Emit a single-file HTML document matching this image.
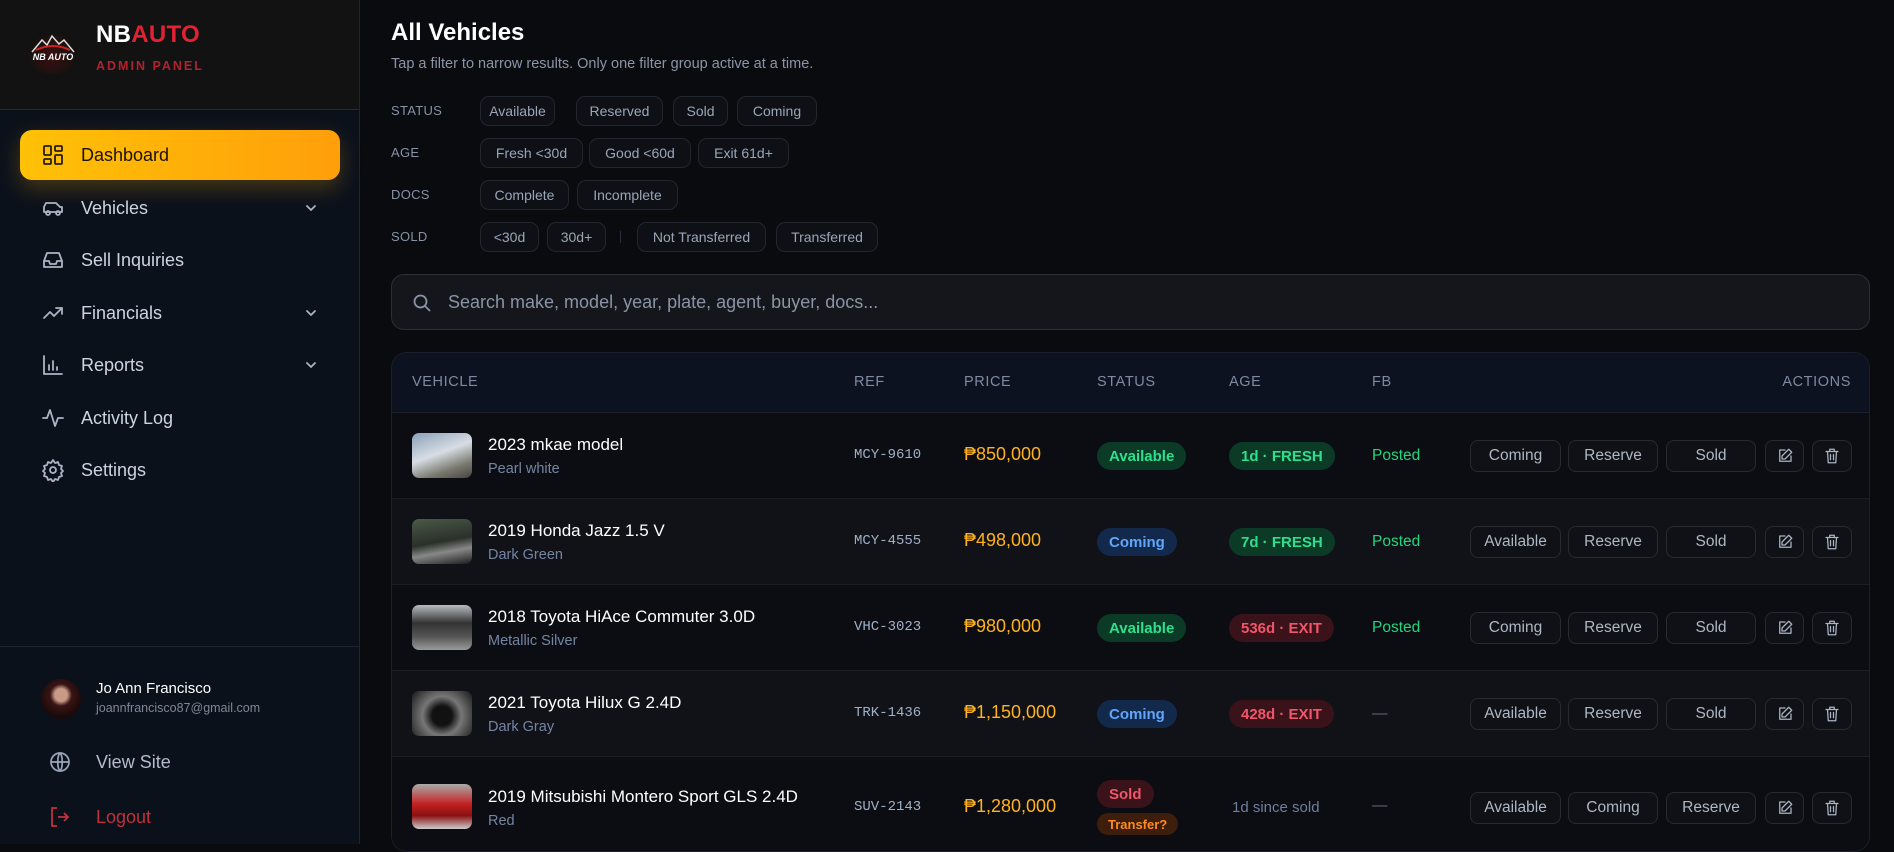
<!DOCTYPE html>
<html><head><meta charset="utf-8"><style>
*{box-sizing:border-box;margin:0;padding:0}
body{width:1894px;height:844px;overflow:hidden;background:#0a0b0f;font-family:"Liberation Sans",Arial,sans-serif;color:#e5e7eb;position:relative}
.side{position:absolute;left:0;top:0;width:360px;height:844px;background:#0b111b;border-right:1px solid #1f2430}
.brand{height:110px;background:#121212;border-bottom:1px solid #262a33;position:relative}
.nav{position:absolute;left:20px;width:320px;height:50px;display:flex;align-items:center;font-size:18px;color:#cbd5e1}
.nav svg{position:absolute;left:21px;width:24px;height:24px;fill:none;stroke:#aab4c3;stroke-width:1.8;stroke-linecap:round;stroke-linejoin:round}
.nav span{position:absolute;left:61px}
.nav .chev{left:auto;right:22px;width:14px;height:14px}
.act{background:linear-gradient(90deg,#ffc107,#ff9f0a);border-radius:12px;color:#1a1300;box-shadow:0 8px 22px rgba(255,170,0,.25)}
.act svg{stroke:#2a1c00}
.main{position:absolute;left:361px;top:0;right:0;height:844px}
h1{position:absolute;left:30px;top:19px;font-size:24px;font-weight:700;color:#fff}
.sub{position:absolute;left:30px;top:56px;font-size:14.5px;color:#8b95a7}
.flab{position:absolute;left:30px;font-size:13px;color:#8792a5;letter-spacing:.3px}
.chip{position:absolute;height:30px;border:1px solid #22262f;border-radius:9px;background:#0e1016;color:#9aa6b8;font-size:14px;display:flex;align-items:center;justify-content:center;white-space:nowrap}
.search{position:absolute;left:30px;top:274px;width:1479px;height:56px;border:1px solid #2a2e37;border-radius:13px;background:#14161b;color:#8a94a6;font-size:18px;display:flex;align-items:center;padding-left:56px}
.search svg{position:absolute;left:20px;top:18px}
.tbl{position:absolute;left:30px;top:352px;width:1479px;height:500px;border:1px solid #1a1f2a;border-radius:16px;overflow:hidden;background:#0c0d12}
.th{position:absolute;left:0;top:0;width:100%;height:60px;background:#0c1220;border-bottom:1px solid #1c212b}
.th div{position:absolute;top:21px;font-size:14.5px;color:#7f8aa0;letter-spacing:.6px}
.row{position:absolute;left:0;width:100%;height:86px;border-bottom:1px solid #1b1e25}
.row>*{position:absolute}
.thumb{left:20px;width:60px;height:45px;border-radius:7px;top:20px}
.nm{left:96px;top:22px;font-size:17px;color:#fff}
.cl{left:96px;top:48px;font-size:14.5px;color:#7485a3}
.ref{left:462px;top:34px;font-family:"Liberation Mono",monospace;font-size:14px;color:#9fb0c8}
.pr{left:572px;top:31px;font-size:18px;color:#ffb21c}
.bd{height:28px;border-radius:14px;font-size:15px;font-weight:700;display:flex;align-items:center;padding:0 12px;top:29px;white-space:nowrap}
.ok{background:#0b3a27;color:#2ee08d}
.cm{background:#13294b;color:#60a5fa}
.ex{background:#3a1219;color:#f0566b}
.fb{left:980px;top:34px;font-size:15.5px;color:#22d67f}
.bt{top:27px;height:32px;border:1px solid #262a33;border-radius:8px;background:#101116;color:#aeb7c5;font-size:15.5px;display:flex;align-items:center;justify-content:center}
.ic svg{width:18px;height:18px;fill:none;stroke:#aab4c3;stroke-width:1.7;stroke-linecap:round;stroke-linejoin:round}
</style></head><body>
<div class="side">
 <div class="brand">
  <div style="position:absolute;left:26px;top:30px;width:52px;height:44px;border-radius:50%;background:radial-gradient(ellipse at 50% 60%,#3a1010,#111 70%)"></div>
  <svg style="position:absolute;left:28px;top:30px" width="50" height="40" viewBox="0 0 50 40"><path d="M4 22 L14 10 L19 15 L24 6 L31 14 L36 10 L46 22" fill="none" stroke="#ddd" stroke-width="1.5"/><path d="M8 20 Q25 12 42 20" stroke="#c22" stroke-width="2" fill="none"/><text x="25" y="30" font-size="9" font-weight="700" font-style="italic" fill="#fff" text-anchor="middle" font-family="Liberation Sans">NB AUTO</text></svg>
  <div style="position:absolute;left:96px;top:21px;font-size:24px;font-weight:800;color:#fff;letter-spacing:.3px">NB<span style="color:#e02232">AUTO</span></div>
  <div style="position:absolute;left:96px;top:59px;font-size:12.5px;font-weight:700;color:#b0222d;letter-spacing:2px">ADMIN PANEL</div>
 </div>
 <div class="nav act" style="top:130px"><svg viewBox="0 0 24 24"><rect x="3" y="3" width="7" height="9" rx="1"/><rect x="14" y="3" width="7" height="5" rx="1"/><rect x="14" y="12" width="7" height="9" rx="1"/><rect x="3" y="16" width="7" height="5" rx="1"/></svg><span>Dashboard</span></div>
 <div class="nav" style="top:183px"><svg viewBox="0 0 24 24"><path d="M3 16V11l2-4h10l4 4h2v5H3z"/><circle cx="7" cy="17" r="2"/><circle cx="17" cy="17" r="2"/></svg><span>Vehicles</span><svg class="chev" viewBox="0 0 14 14"><path d="M3 5l4 4 4-4"/></svg></div>
 <div class="nav" style="top:235px"><svg viewBox="0 0 24 24"><path d="M3 13l3-8h12l3 8v6H3z"/><path d="M3 13h5l1 3h6l1-3h5"/></svg><span>Sell Inquiries</span></div>
 <div class="nav" style="top:288px"><svg viewBox="0 0 24 24"><path d="M3 17l6-6 4 4 8-8"/><path d="M15 7h6v6"/></svg><span>Financials</span><svg class="chev" viewBox="0 0 14 14"><path d="M3 5l4 4 4-4"/></svg></div>
 <div class="nav" style="top:340px"><svg viewBox="0 0 24 24"><path d="M3 3v18h18"/><path d="M8 17v-5M12 17V8M16 17v-3"/></svg><span>Reports</span><svg class="chev" viewBox="0 0 14 14"><path d="M3 5l4 4 4-4"/></svg></div>
 <div class="nav" style="top:393px"><svg viewBox="0 0 24 24"><path d="M2 12h4l3-8 5 16 3-8h5"/></svg><span>Activity Log</span></div>
 <div class="nav" style="top:445px"><svg viewBox="0 0 24 24"><circle cx="12" cy="12" r="3"/><path d="M12 2l2 3 3-1 1 3 3 1-1 3 2 2-2 2 1 3-3 1-1 3-3-1-2 3-2-3-3 1-1-3-3-1 1-3-2-2 2-2-1-3 3-1 1-3 3 1z"/></svg><span>Settings</span></div>
 <div style="position:absolute;left:0;top:646px;width:360px;border-top:1px solid #1f2430"></div>
 <div style="position:absolute;left:41px;top:679px;width:40px;height:40px;border-radius:50%;background:radial-gradient(circle at 50% 40%,#c99a86 0 20%,#3a1414 35%,#1a0a0a 70%)"></div>
 <div style="position:absolute;left:96px;top:680px;font-size:15px;color:#fff">Jo Ann Francisco</div>
 <div style="position:absolute;left:96px;top:701px;font-size:12.5px;color:#7f8796">joannfrancisco87@gmail.com</div>
 <svg style="position:absolute;left:48px;top:750px" width="24" height="24" viewBox="0 0 24 24" fill="none" stroke="#9aa6b8" stroke-width="1.7"><circle cx="12" cy="12" r="9"/><path d="M3 12h18M12 3c3 3 3 15 0 18M12 3c-3 3-3 15 0 18"/></svg>
 <div style="position:absolute;left:96px;top:752px;font-size:18px;color:#b3bccb">View Site</div>
 <svg style="position:absolute;left:48px;top:805px" width="24" height="24" viewBox="0 0 24 24" fill="none" stroke="#c0303c" stroke-width="1.8"><path d="M9 3H4v18h5M10 12h10M16 8l4 4-4 4"/></svg>
 <div style="position:absolute;left:96px;top:807px;font-size:18px;color:#c0303c">Logout</div>
</div>
<div class="main">
 <h1>All Vehicles</h1>
 <div class="sub">Tap a filter to narrow results. Only one filter group active at a time.</div>
 <div class="flab" style="top:103px">STATUS</div>
 <div class="chip" style="left:119px;top:96px;width:75px">Available</div>
 <div class="chip" style="left:215px;top:96px;width:87px">Reserved</div>
 <div class="chip" style="left:312px;top:96px;width:55px">Sold</div>
 <div class="chip" style="left:376px;top:96px;width:80px">Coming</div>
 <div class="flab" style="top:145px">AGE</div>
 <div class="chip" style="left:119px;top:138px;width:103px">Fresh &lt;30d</div>
 <div class="chip" style="left:228px;top:138px;width:102px">Good &lt;60d</div>
 <div class="chip" style="left:337px;top:138px;width:91px">Exit 61d+</div>
 <div class="flab" style="top:187px">DOCS</div>
 <div class="chip" style="left:119px;top:180px;width:89px">Complete</div>
 <div class="chip" style="left:216px;top:180px;width:101px">Incomplete</div>
 <div class="flab" style="top:229px">SOLD</div>
 <div class="chip" style="left:119px;top:222px;width:59px">&lt;30d</div>
 <div class="chip" style="left:186px;top:222px;width:59px">30d+</div>
 <div style="position:absolute;left:259px;top:231px;width:1px;height:12px;background:#2b3040"></div>
 <div class="chip" style="left:276px;top:222px;width:129px">Not Transferred</div>
 <div class="chip" style="left:415px;top:222px;width:102px">Transferred</div>
 <div class="search"><svg width="20" height="20" viewBox="0 0 20 20" fill="none" stroke="#8a94a6" stroke-width="1.8"><circle cx="8.5" cy="8.5" r="6"/><path d="M13 13l5 5"/></svg>Search make, model, year, plate, agent, buyer, docs...</div>
 <div class="tbl">
  <div class="th"><div style="left:20px">VEHICLE</div><div style="left:462px">REF</div><div style="left:572px">PRICE</div><div style="left:705px">STATUS</div><div style="left:837px">AGE</div><div style="left:980px">FB</div><div style="right:18px">ACTIONS</div></div>

  <div class="row" style="top:60px;background:#0c0d12">
   <div class="thumb" style="background:linear-gradient(160deg,#8aa0b8,#d8dde4 45%,#7a7a70 75%,#454540)"></div>
   <div class="nm">2023 mkae model</div><div class="cl">Pearl white</div>
   <div class="ref">MCY-9610</div><div class="pr">₱850,000</div>
   <div class="bd ok" style="left:705px">Available</div><div class="bd ok" style="left:837px">1d · FRESH</div>
   <div class="fb">Posted</div>
   <div class="bt" style="left:1078px;width:91px">Coming</div><div class="bt" style="left:1176px;width:90px">Reserve</div><div class="bt" style="left:1274px;width:90px">Sold</div>
   <div class="bt ic" style="left:1373px;width:39px"><svg viewBox="0 0 24 24"><path d="M12 4H5v15h15v-7"/><path d="M17 3l4 4-9 9H8v-4z"/></svg></div>
   <div class="bt ic" style="left:1420px;width:40px"><svg viewBox="0 0 24 24"><path d="M4 6h16M9 6V3h6v3M6 6l1 15h10l1-15M10 10v7M14 10v7"/></svg></div>
  </div>
  <div class="row" style="top:146px;background:#111217">
   <div class="thumb" style="background:linear-gradient(170deg,#4b5a48,#2a302a 50%,#888 70%,#1c1c1c)"></div>
   <div class="nm">2019 Honda Jazz 1.5 V</div><div class="cl">Dark Green</div>
   <div class="ref">MCY-4555</div><div class="pr">₱498,000</div>
   <div class="bd cm" style="left:705px">Coming</div><div class="bd ok" style="left:837px">7d · FRESH</div>
   <div class="fb">Posted</div>
   <div class="bt" style="left:1078px;width:91px">Available</div><div class="bt" style="left:1176px;width:90px">Reserve</div><div class="bt" style="left:1274px;width:90px">Sold</div>
   <div class="bt ic" style="left:1373px;width:39px"><svg viewBox="0 0 24 24"><path d="M12 4H5v15h15v-7"/><path d="M17 3l4 4-9 9H8v-4z"/></svg></div>
   <div class="bt ic" style="left:1420px;width:40px"><svg viewBox="0 0 24 24"><path d="M4 6h16M9 6V3h6v3M6 6l1 15h10l1-15M10 10v7M14 10v7"/></svg></div>
  </div>
  <div class="row" style="top:232px;background:#0c0d12">
   <div class="thumb" style="background:linear-gradient(180deg,#b8bcc0,#333 40%,#555 70%,#9a9a9a)"></div>
   <div class="nm">2018 Toyota HiAce Commuter 3.0D</div><div class="cl">Metallic Silver</div>
   <div class="ref">VHC-3023</div><div class="pr">₱980,000</div>
   <div class="bd ok" style="left:705px">Available</div><div class="bd ex" style="left:837px">536d · EXIT</div>
   <div class="fb">Posted</div>
   <div class="bt" style="left:1078px;width:91px">Coming</div><div class="bt" style="left:1176px;width:90px">Reserve</div><div class="bt" style="left:1274px;width:90px">Sold</div>
   <div class="bt ic" style="left:1373px;width:39px"><svg viewBox="0 0 24 24"><path d="M12 4H5v15h15v-7"/><path d="M17 3l4 4-9 9H8v-4z"/></svg></div>
   <div class="bt ic" style="left:1420px;width:40px"><svg viewBox="0 0 24 24"><path d="M4 6h16M9 6V3h6v3M6 6l1 15h10l1-15M10 10v7M14 10v7"/></svg></div>
  </div>
  <div class="row" style="top:318px;background:#111217">
   <div class="thumb" style="background:radial-gradient(circle at 50% 55%,#111 0 25%,#777 50%,#2a2a2a 90%)"></div>
   <div class="nm">2021 Toyota Hilux G 2.4D</div><div class="cl">Dark Gray</div>
   <div class="ref">TRK-1436</div><div class="pr">₱1,150,000</div>
   <div class="bd cm" style="left:705px">Coming</div><div class="bd ex" style="left:837px">428d · EXIT</div>
   <div class="fb" style="color:#5b6578">—</div>
   <div class="bt" style="left:1078px;width:91px">Available</div><div class="bt" style="left:1176px;width:90px">Reserve</div><div class="bt" style="left:1274px;width:90px">Sold</div>
   <div class="bt ic" style="left:1373px;width:39px"><svg viewBox="0 0 24 24"><path d="M12 4H5v15h15v-7"/><path d="M17 3l4 4-9 9H8v-4z"/></svg></div>
   <div class="bt ic" style="left:1420px;width:40px"><svg viewBox="0 0 24 24"><path d="M4 6h16M9 6V3h6v3M6 6l1 15h10l1-15M10 10v7M14 10v7"/></svg></div>
  </div>
  <div class="row" style="top:404px;height:100px;background:#0c0d12;border:none">
   <div class="thumb" style="top:27px;background:linear-gradient(180deg,#aaa,#c42020 45%,#8a1010 70%,#ccc)"></div>
   <div class="nm" style="top:30px">2019 Mitsubishi Montero Sport GLS 2.4D</div><div class="cl" style="top:56px">Red</div>
   <div class="ref" style="top:42px">SUV-2143</div><div class="pr" style="top:39px">₱1,280,000</div>
   <div class="bd" style="left:705px;top:23px;background:#3a1219;color:#f0566b">Sold</div>
   <div class="bd" style="left:705px;top:56px;height:22px;font-size:13px;padding:0 11px;background:#3d1d0b;color:#ff8a1e">Transfer?</div>
   <div style="left:840px;top:42px;font-size:15px;color:#6d7f9e">1d since sold</div>
   <div class="fb" style="top:40px;color:#5b6578">—</div>
   <div class="bt" style="left:1078px;top:35px;width:91px">Available</div><div class="bt" style="left:1176px;top:35px;width:90px">Coming</div><div class="bt" style="left:1274px;top:35px;width:90px">Reserve</div>
   <div class="bt ic" style="left:1373px;top:35px;width:39px"><svg viewBox="0 0 24 24"><path d="M12 4H5v15h15v-7"/><path d="M17 3l4 4-9 9H8v-4z"/></svg></div>
   <div class="bt ic" style="left:1420px;top:35px;width:40px"><svg viewBox="0 0 24 24"><path d="M4 6h16M9 6V3h6v3M6 6l1 15h10l1-15M10 10v7M14 10v7"/></svg></div>
  </div>
 </div>
</div>
</body></html>
